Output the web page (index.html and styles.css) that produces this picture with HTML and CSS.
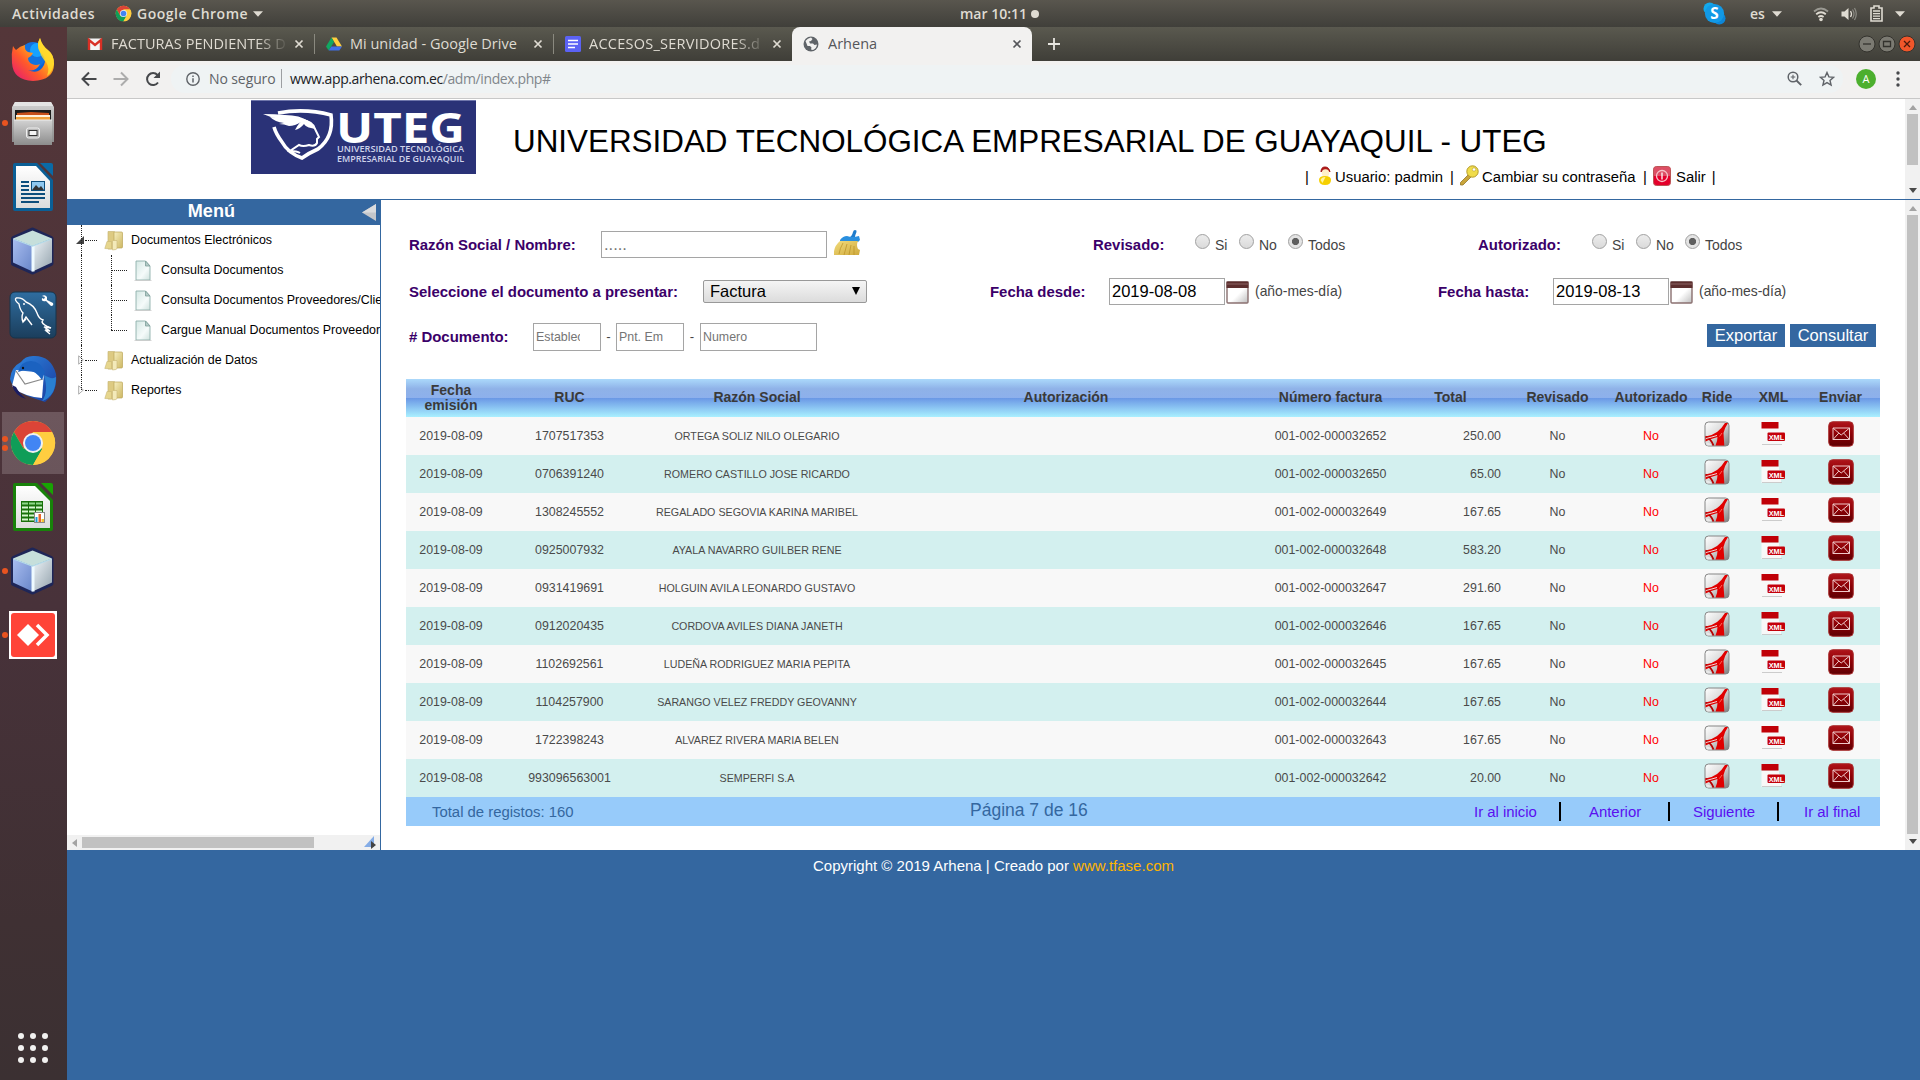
FILE: index.html
```html
<!DOCTYPE html>
<html lang="es">
<head>
<meta charset="utf-8">
<title>Arhena</title>
<link rel="stylesheet" href="styles.css">
</head>
<body>
<svg class="defs" width="0" height="0" aria-hidden="true">
  <defs>
    <linearGradient id="gPdf" x1="0" y1="0" x2="1" y2="1"><stop offset="0" stop-color="#fff"/><stop offset=".45" stop-color="#dedede"/><stop offset="1" stop-color="#7b7b7b"/></linearGradient>
    <linearGradient id="gMail" x1="0" y1="0" x2="0" y2="1"><stop offset="0" stop-color="#b0141a"/><stop offset=".5" stop-color="#8c0005"/><stop offset="1" stop-color="#5e0003"/></linearGradient>
    <linearGradient id="gFolder" x1="0" y1="0" x2="1" y2="1"><stop offset="0" stop-color="#f7efc0"/><stop offset="1" stop-color="#cdb762"/></linearGradient>
    <linearGradient id="gDoc" x1="0" y1="0" x2="1" y2="1"><stop offset="0" stop-color="#d5e8e4"/><stop offset=".6" stop-color="#f5fbfa"/><stop offset="1" stop-color="#cfe2de"/></linearGradient>
    <linearGradient id="gCubeL" x1="0" y1="0" x2="1" y2="1"><stop offset="0" stop-color="#a9bdf0"/><stop offset="1" stop-color="#6886c8"/></linearGradient>
    <linearGradient id="gCubeR" x1="0" y1="0" x2="1" y2="1"><stop offset="0" stop-color="#f0f6fa"/><stop offset="1" stop-color="#94a3ad"/></linearGradient>
    <linearGradient id="gSql" x1="0" y1="0" x2="0" y2="1"><stop offset="0" stop-color="#2f6da0"/><stop offset="1" stop-color="#1b3e5c"/></linearGradient>
    <linearGradient id="gFox" x1="1" y1="0" x2="0" y2="1"><stop offset="0" stop-color="#fff44a"/><stop offset=".35" stop-color="#ffb01a"/><stop offset=".62" stop-color="#ff5a2a"/><stop offset="1" stop-color="#e3107e"/></linearGradient>
    <linearGradient id="gMetal" x1="0" y1="0" x2="0" y2="1"><stop offset="0" stop-color="#d2d2d2"/><stop offset="1" stop-color="#8c8c8c"/></linearGradient>
    <linearGradient id="gBird" x1="0" y1="0" x2="1" y2="1"><stop offset="0" stop-color="#2d86e0"/><stop offset="1" stop-color="#1a3a9c"/></linearGradient>
    <linearGradient id="gPaper" x1="0" y1="0" x2="0" y2="1"><stop offset="0" stop-color="#fff"/><stop offset="1" stop-color="#dcdcdc"/></linearGradient>
    <linearGradient id="gCal" x1="0" y1="0" x2="1" y2="1"><stop offset=".55" stop-color="#fff"/><stop offset="1" stop-color="#bdbdbd"/></linearGradient>
    <linearGradient id="gBroom" x1="0" y1="0" x2="1" y2="1"><stop offset="0" stop-color="#f2dc7c"/><stop offset="1" stop-color="#cfa93c"/></linearGradient>
    <symbol id="pdf" viewBox="0 0 26 26">
      <rect x="1" y="1" width="24" height="24" rx="3.5" fill="url(#gPdf)" stroke="#858585"/>
      <path d="M1.500 15.500Q14 14 21 2h3q-3.500 5-4.500 10l.8 12.500H11.500q2-4 2-8.500Q7 17.500 1.500 20.500z" fill="#e00000"/>
      <path d="M1.500 15.500Q7.500 18.500 9.500 24.500" fill="none" stroke="#b80000" stroke-width="1.800"/>
      <path d="M2 17.500q6-1.500 11-3" fill="none" stroke="#f3f3f3" stroke-width=".9"/>
      <path d="M2 21.500q4 0 6 3H3q-1-1-1-3z" fill="#e8e8e8"/>
      <path d="M15.500 15.500l2.500-3.500" stroke="#ff6a5c" stroke-width="1"/>
    </symbol>
    <symbol id="xml" viewBox="0 0 24 24">
      <path d="M.5 6.500H18V10h2v13H.5z" fill="#f8f8f8"/><path d="M1 22.500h20" stroke="#ccc"/>
      <rect x=".5" y="0" width="17" height="6.500" fill="#c00007"/>
      <rect x="6.500" y="10.500" width="17.500" height="8.500" rx="1" fill="#c4000a"/>
      <text x="7.700" y="17.600" textLength="15.500" lengthAdjust="spacingAndGlyphs" class="xml-text">XML</text>
    </symbol>
    <symbol id="mail" viewBox="0 0 26 26">
      <rect x=".7" y=".7" width="24.600" height="24.600" rx="4" fill="url(#gMail)" stroke="#a33"/>
      <path d="M5 7h16.500v11.500H5zM5 7l8.200 7L21.500 7M5 18.500l5.800-6.400M21.500 18.500l-5.800-6.400" fill="none" stroke="#efc9c9" stroke-width="1"/>
    </symbol>
    <symbol id="folder" viewBox="0 0 20 21">
      <path d="M4 1.500h6l1 .8V19H4z" fill="#ddca82" stroke="#c9b777" stroke-width=".7"/>
      <path d="M10 2h7.500q1 0 1 1v14q0 1-1 1H10z" fill="url(#gFolder)" stroke="#bba659" stroke-width=".7"/>
      <path d="M.8 18.500 3 11.500h4.500v7.500z" fill="#e6d68e" stroke="#c9b777" stroke-width=".6"/>
      <path d="M8.500 20V11.500q0-1 1-1h3.500v7.500q0 1-1 1.500z" fill="#f3eaba" stroke="#c9b777" stroke-width=".6"/>
    </symbol>
    <symbol id="page" viewBox="0 0 18 21">
      <path d="M2 1h9.500L16 6v14H2z" fill="url(#gDoc)" stroke="#8fb0ab" stroke-width=".9"/>
      <path d="M11.500 1v5H16z" fill="#b5ccc8" stroke="#7d9f9a" stroke-width=".8"/>
      <path d="M.5 20.500h17" stroke="#c9c9c9" stroke-width=".8"/>
    </symbol>
    <symbol id="cube" viewBox="0 0 48 48">
      <path d="M23.500 3 42 11.500v25L23.500 45 4.500 36.500v-25z" fill="#1e2658" stroke="#1e2658" stroke-width="5" stroke-linejoin="round"/>
      <path d="M23.500 3.500 43 11.500 23.500 19 4 11.500z" fill="#c6dfdb"/>
      <path d="M4 11.500 23.500 19v25.500L4 35.500z" fill="url(#gCubeL)"/>
      <path d="M43 11.500 23.500 19v25.500l19.500-9z" fill="url(#gCubeR)"/>
      <path d="M24 19v25.500" stroke="#eefaff" stroke-width="3"/>
      <path d="M4.500 12l19 7 19-7" fill="none" stroke="#b5dcea" stroke-width="1.200"/>
    </symbol>
    <symbol id="chrome" viewBox="0 0 48 48">
      <circle cx="24" cy="24" r="22" fill="#ffcd40"/>
      <path d="M4.900 13A22 22 0 0 1 43.100 13H24L14.500 29.500z" fill="#db4437"/>
      <path d="M4.900 13A22 22 0 0 0 24 46l9.500-16.500L14.500 29.500z" fill="#0f9d58"/>
      <path d="M43.100 13H24v11l9.500 5.500L24 46a22 22 0 0 0 19.100-33z" fill="#ffcd40"/>
      <circle cx="24" cy="24" r="10" fill="#f1f1f1"/><circle cx="24" cy="24" r="8" fill="#4285f4"/>
    </symbol>
    <symbol id="calendar" viewBox="0 0 23 23">
      <rect x="1" y="1" width="21" height="21" rx="1" fill="url(#gCal)" stroke="#8a7070" stroke-width="1.400"/>
      <rect x=".5" y=".5" width="22" height="6.500" fill="#5c2e2e"/><path d="M1 3h21" stroke="#8a6262"/>
    </symbol>
    <symbol id="close" viewBox="0 0 10 10"><path d="M1.500 1.500l7 7M8.500 1.500l-7 7" fill="none" stroke="currentColor" stroke-width="1.700"/></symbol>
    <symbol id="caret" viewBox="0 0 10 6"><path d="M0 .3h10L5 5.700z" fill="currentColor"/></symbol>
  </defs>
</svg>

<header class="topbar">
  <span class="activities">Actividades</span>
  <svg class="tb-chrome"><use href="#chrome"/></svg>
  <span class="appname">Google Chrome</span>
  <svg class="caret"><use href="#caret"/></svg>
  <div class="clock"><span>mar 10:11</span><i></i></div>
  <div class="tray">
    <svg class="skype" viewBox="0 0 24 24"><circle cx="7" cy="7" r="6.500" fill="#12a9ec"/><circle cx="17" cy="17" r="6.500" fill="#0d86d8"/><circle cx="12" cy="12" r="10" fill="#1299e6"/><text x="12" y="17.500" text-anchor="middle" class="skype-s">S</text></svg>
    <span class="lang">es</span><svg class="caret"><use href="#caret"/></svg>
    <svg class="wifi" viewBox="0 0 16 16"><g fill="none" stroke="#9a9992" stroke-width="1.800"><path d="M1 5.500q7-6 14 0"/><path d="M3.200 8.300q4.800-4 9.600 0" stroke="#dfdbd2"/><path d="M5.400 11q2.600-2 5.200 0" stroke="#dfdbd2"/></g><circle cx="8" cy="13.500" r="1.800" fill="#dfdbd2"/></svg>
    <svg class="volume" viewBox="0 0 16 16"><path d="M1 5.500h3L8 2v12l-4-3.500H1z" fill="#dfdbd2"/><path d="M10 5q2 3 0 6" fill="none" stroke="#dfdbd2" stroke-width="1.300"/><path d="M12 3.500q3 4.500 0 9M14 2q3.500 6 0 12" fill="none" stroke="#8d8c85" stroke-width="1.200"/></svg>
    <svg class="battery" viewBox="0 0 13 17"><path d="M1 3h3V1h5v2h3v13H1z" fill="none" stroke="#dfdbd2" stroke-width="1.600"/><path d="M3 6h7M3 8.600h7M3 11.200h7M3 13.600h7" stroke="#dfdbd2" stroke-width="1.300"/></svg>
    <svg class="caret"><use href="#caret"/></svg>
  </div>
</header>

<div class="desktop">
  <nav class="launcher">
    <div class="app"><svg viewBox="0 0 48 48"><circle cx="25" cy="27" r="17" fill="#0a62d8"/><circle cx="24" cy="20" r="13" fill="#1273e0"/><circle cx="28" cy="15" r="7" fill="#17a2ff"/><path d="M4 11q1 2 3 4 4-4 9-5-1 5 3 7l5 1q-1 3-5 5 0 4 4 6 4 2 8 0-4 8-12 6 11 5 16-5Q38 23 31 17q-4-7 0-14 2 8 9 13 5 4 5 13 0 16-21 17Q4 45 3 28 2 19 4 11z" fill="url(#gFox)"/><path d="M31 17q-4-7 0-14 2 8 9 13 5 4 5 13l-2 6q-2 4-5 6 3-8-1-14-5-5-6-10z" fill="#ffe02e" opacity=".8"/></svg></div>
    <div class="app running"><svg viewBox="0 0 48 48"><path d="M6 3h36l3 5v35H3V8z" fill="url(#gMetal)"/><path d="M6 3h36l2 4H4z" fill="#e4e4e4"/><rect x="6" y="11" width="36" height="12" fill="#1c1c1c"/><path d="M8 14l14-1 18 1v8H8z" fill="#c8501a"/><rect x="7" y="16" width="34" height="2" fill="#fff1dc"/><path d="M7 18h34v4H7z" fill="#f0a03c"/><path d="M5 21h38v25H5z" fill="url(#gMetal)"/><path d="M5 21h38" stroke="#eee"/><rect x="17.500" y="29" width="13" height="10" rx="2" fill="#b9b9b9" stroke="#efefef"/><rect x="20" y="31.500" width="8" height="5" fill="#f4f4f4" stroke="#333"/></svg></div>
    <div class="app"><svg viewBox="0 0 48 48"><path d="M6 0h22l16 17v29q0 2-2 2H6q-2 0-2-2V2q0-2 2-2z" fill="#0a5f96"/><path d="M31 0h11q2 0 2 2v11z" fill="#0a6aa6"/><path d="M7 3h20l14 15v27H7z" fill="url(#gPaper)"/><g stroke="#0d4e7c" stroke-width="2"><path d="M12 19h8M12 23h8M12 27h8M12 31h24M12 35h24M12 39h18"/></g><rect x="22.500" y="18.500" width="13" height="9" fill="#8fc8ef" stroke="#0d4e7c"/><path d="M23 27l4-5 3 3 2-2 3 4z" fill="#333"/></svg></div>
    <div class="app"><svg><use href="#cube"/></svg></div>
    <div class="app"><svg viewBox="0 0 48 48"><rect x="1" y="1" width="46" height="46" rx="5" fill="url(#gSql)" stroke="#16344d"/><path d="M7 7q6-1 10 4 8 3 11 11 2 6 6 7l-1 2q1 3 9 6l-7-1 6 4-5-1 5 4M7 7q-2 2 3 6 1 6 4 9-2 4 0 9l3-5 6 8M14 31l3-3" fill="none" stroke="#fff" stroke-width="1.400"/><path d="M33 5q3-2 5 1l0 3 6 3q1 3-2 3l-5-5q-5 1-4-3l2 1 1-2z" fill="#fff"/><circle cx="15" cy="13" r="1" fill="#fff"/></svg></div>
    <div class="app"><svg viewBox="0 0 48 48"><path d="M24 1q18-1 23 18 2 18-11 28l-9-3Q4 37 1 24 2 12 12 7 16 1 24 1z" fill="url(#gBird)"/><path d="M3 31 7 15l28 3-2 25-8-1Q8 38 3 31z" fill="#fff"/><path d="M7 16l9 13 18-5" fill="none" stroke="#8a8a8a" stroke-width="1.200"/><path d="M9 17Q12 6 22 6q9 0 14 11l-3 8q-6-9-14-10-5 0-10 2z" fill="#1b62c0"/><path d="M33 46q7-9 2-26 8 5 12 2 0 9-3 15-4 7-11 9z" fill="#2a7fd0"/><path d="M3 30q3 11 14 14-7-6-10-12z" fill="#1a1c62"/><circle cx="14" cy="13" r="1.200" fill="#111"/></svg></div>
    <div class="app running twice active"><svg><use href="#chrome"/></svg></div>
    <div class="app"><svg viewBox="0 0 48 48"><path d="M6 0h22l16 17v29q0 2-2 2H6q-2 0-2-2V2q0-2 2-2z" fill="#18820a"/><path d="M32 0h10q2 0 2 2v10z" fill="#18a303"/><path d="M7 3h19l15 15v27H7z" fill="url(#gPaper)"/><rect x="12" y="18" width="22" height="21" fill="#18700a"/><path d="M13 19.500h6v2h-6zM20 19.500h6v2h-6zM27 19.500h6v2h-6z" fill="#8fd88a"/><path d="M13 23.500h6v2h-6zm7 0h6v2h-6zm7 0h6v2h-6zm-14 4h6v2h-6zm7 0h6v2h-6zm7 0h6v2h-6zm-14 4h6v2h-6zm7 0h6v2h-6zm-7 4h6v2h-6zm7 0h6v2h-6z" fill="#d8f6d2"/><rect x="25.500" y="29.500" width="10" height="10" fill="#fff" stroke="#888"/><path d="M26.500 34h2v5h-2z" fill="#1b9ad6"/><path d="M29.500 31h2.500v8h-2.500z" fill="#e8662b"/><path d="M32.500 36h2.500v3h-2.500z" fill="#f4c430"/></svg></div>
    <div class="app running"><svg><use href="#cube"/></svg></div>
    <div class="app running"><svg viewBox="0 0 48 48"><path d="M0 0h48v48H0z" fill="#fff"/><rect x="2" y="2" width="44" height="44" rx="3" fill="#ff4438"/><path d="M19 13l11 11-11 11L8 24z" fill="#fff"/><path d="M28 14l10 10-10 10" fill="none" stroke="#fff" stroke-width="3.500"/></svg></div>
    <svg class="all-apps" viewBox="0 0 32 32"><g fill="#f2f1f0"><circle cx="4" cy="4" r="3"/><circle cx="16" cy="4" r="3"/><circle cx="28" cy="4" r="3"/><circle cx="4" cy="16" r="3"/><circle cx="16" cy="16" r="3"/><circle cx="28" cy="16" r="3"/><circle cx="4" cy="28" r="3"/><circle cx="16" cy="28" r="3"/><circle cx="28" cy="28" r="3"/></g></svg>
  </nav>

  <main class="browser">
    <div class="tabs">
      <div class="tab t1"><svg class="fav" viewBox="0 0 16 16"><path d="M1 2.500h14v11.500H1z" fill="#f4f4f4"/><path d="M2 14V4l6 5 6-5v10" fill="none" stroke="#d93025" stroke-width="2.400"/></svg><span class="name fade">FACTURAS PENDIENTES D</span><svg class="x"><use href="#close"/></svg></div>
      <div class="tab t2"><svg class="fav" viewBox="0 0 16 16"><path d="M5.500 1.500h5L16 10.500h-5z" fill="#ffcf3f"/><path d="M5.500 1.500L8 6 2.700 14.500 0 10.500z" fill="#11a861"/><path d="M5.300 10.500H16l-2.700 4H2.700z" fill="#3f6fe8"/></svg><span class="name">Mi unidad - Google Drive</span><svg class="x"><use href="#close"/></svg></div>
      <div class="tab t3"><svg class="fav" viewBox="0 0 16 16"><rect width="16" height="16" rx="1.500" fill="#5b62f4"/><path d="M3 4.500h10M3 8h10M3 11.500h7" stroke="#fff" stroke-width="1.700"/></svg><span class="name fade">ACCESOS_SERVIDORES.d</span><svg class="x"><use href="#close"/></svg></div>
      <div class="tab current"><svg class="fav" viewBox="0 0 16 16"><circle cx="8" cy="8" r="7.500" fill="#5f6368"/><path d="M2.500 5q2-3 5.500-3.500L9.500 3 8 5 6 5.500 7 7.500h3l1.500 1.500 2.500-.5q-.5 4-4 5.500L8 13.500l.5-2L7 10H4.500z" fill="#f2f1f0"/></svg><span class="name">Arhena</span><svg class="x"><use href="#close"/></svg></div>
      <svg class="plus" viewBox="0 0 12 12"><path d="M6 0v12M0 6h12" stroke="#e8e6e0" stroke-width="1.800"/></svg>
      <div class="winbtns"><svg viewBox="0 0 18 18"><circle cx="9" cy="9" r="8" fill="#7b7a72" stroke="#33322d"/><path d="M5 9h8" stroke="#33322d" stroke-width="1.300"/></svg><svg viewBox="0 0 18 18"><circle cx="9" cy="9" r="8" fill="#7b7a72" stroke="#33322d"/><path d="M5.500 6.500h7v5h-7z" fill="none" stroke="#33322d" stroke-width="1.300"/></svg><svg viewBox="0 0 18 18"><circle cx="9" cy="9" r="8" fill="#f0562a" stroke="#33322d"/><path d="M6 6l6 6M12 6l-6 6" stroke="#4a1a0c" stroke-width="1.300"/></svg></div>
    </div>
    <div class="toolbar">
      <svg class="nav" viewBox="0 0 16 16"><path d="M15.500 8H2M8 1.500L1.500 8 8 14.500" fill="none" stroke="#46484b" stroke-width="2"/></svg>
      <svg class="nav" viewBox="0 0 16 16"><path d="M.5 8H14M8 1.500L14.500 8 8 14.500" fill="none" stroke="#acacac" stroke-width="2"/></svg>
      <svg class="nav" viewBox="0 0 16 16"><path d="M13 11.500A6 6 0 1 1 12.500 4" fill="none" stroke="#46484b" stroke-width="2"/><path d="M15 .5v6.500H8.500z" fill="#46484b"/></svg>
      <div class="omnibox">
        <svg class="info" viewBox="0 0 14 14"><circle cx="7" cy="7" r="6.200" fill="none" stroke="#5f6368" stroke-width="1.400"/><path d="M7 6.200v4.300M7 3.500v1.500" stroke="#5f6368" stroke-width="1.500"/></svg>
        <span class="insecure">No seguro</span><i class="divider"></i>
        <span class="url">www.app.arhena.com.ec<em>/adm/index.php#</em></span>
        <svg class="zoom" viewBox="0 0 15 15"><circle cx="6" cy="6" r="4.800" fill="none" stroke="#5f6368" stroke-width="1.500"/><path d="M9.500 9.500l4.700 4.700" stroke="#5f6368" stroke-width="1.900"/><path d="M6 3.700v4.600M3.700 6h4.600" stroke="#5f6368" stroke-width="1.100"/></svg>
        <svg class="star" viewBox="0 0 16 16"><path d="M8 1.500l1.900 4.400 4.700.4-3.600 3.100 1.100 4.700L8 11.600l-4.100 2.500L5 9.400 1.400 6.300l4.700-.4z" fill="none" stroke="#5f6368" stroke-width="1.400"/></svg>
      </div>
      <span class="avatar">A</span>
      <svg class="dots" viewBox="0 0 4 16"><circle cx="2" cy="2" r="1.700"/><circle cx="2" cy="8" r="1.700"/><circle cx="2" cy="14" r="1.700"/></svg>
    </div>

    <section class="banner">
      <svg class="logo" viewBox="0 0 225 74"><rect width="225" height="74" fill="#2a3277"/><path d="M0 .5h225" stroke="#6f76ab"/>
        <path d="M27 13Q54 8 80 15 83 37 67 49q-9 4-16 9-14-5-20-16-6-8-8-15" fill="none" stroke="#fff" stroke-width="3.600"/>
        <path d="M12 14q12 0 22 1 15 0 23 6l-7 1q-6 4-12 4-5-2-10-2l5-1q-9-1-14-6l7 1q-8-1-14-4z" fill="#fff"/>
        <path d="M50 20q12 1 14 9l4 8-2 2v4q-2 4-8 2-6 2-10 0l-9 6q7 0 10 2" fill="none" stroke="#fff" stroke-width="2"/><path d="M53 19q8 2 11 10l-4-1q-5-1-7-4-4 5-9 6 4-8 9-11z" fill="#fff"/>
        <text x="85" y="43" class="logo-name" textLength="129" lengthAdjust="spacingAndGlyphs">UTEG</text>
        <text x="86" y="52" class="logo-sub" textLength="127" lengthAdjust="spacingAndGlyphs">UNIVERSIDAD TECNOLÓGICA</text><text x="86" y="61.500" class="logo-sub" textLength="127" lengthAdjust="spacingAndGlyphs">EMPRESARIAL DE GUAYAQUIL</text></svg>
      <div class="banner-text">
        <h1>UNIVERSIDAD TECNOLÓGICA EMPRESARIAL DE GUAYAQUIL - UTEG</h1>
        <div class="userbar"><b>|</b>
          <svg class="person" viewBox="0 0 14 20"><path d="M3 6q0-5 4-5t5 5" fill="#b01818" stroke="#a01212"/><circle cx="7.500" cy="7" r="3.800" fill="#fff0c8"/><path d="M1 14q0-4 6-4t6 4q0 5-6 5t-6-5z" fill="#f6d000"/><path d="M2.500 14q1-3 5-3l-3 6z" fill="#fff4a0"/></svg><span class="user">Usuario: padmin</span><b>|</b>
          <svg class="key" viewBox="0 0 20 22"><path d="M10 9l2.500 2.500L4 20H1.500v-2.500z" fill="#c9a53a" stroke="#94782a" stroke-width=".8"/><circle cx="13.500" cy="6.500" r="5.700" fill="#f0dc4a" stroke="#b39a2a"/><circle cx="15" cy="4.500" r="1.700" fill="#fff" stroke="#b39a2a" stroke-width=".6"/></svg><span class="pass">Cambiar su contraseña</span><b>|</b>
          <svg class="power" viewBox="0 0 18 20"><rect x=".5" y=".5" width="17" height="19" rx="3" fill="#e4002b" stroke="#b55"/><path d="M1 3q0-2 2-2h12q2 0 2 2v7H1z" fill="#d8838c" opacity=".6"/><circle cx="9" cy="10" r="5.500" fill="none" stroke="#f7c4ca" stroke-width="1.300"/><path d="M9 6.500v7" stroke="#fff" stroke-width="1.300"/></svg><span>Salir</span><b>|</b>
        </div>
      </div>
      <div class="vscroll"><svg class="arrow dim" viewBox="0 0 8 5"><path d="M0 5h8L4 0z"/></svg><i class="thumb short"></i><svg class="arrow down" viewBox="0 0 8 5"><path d="M0 0h8L4 5z"/></svg></div>
    </section>

    <section class="frames">
      <aside class="sidebar">
        <div class="menu-head"><span>Menú</span><svg viewBox="0 0 14 17"><path d="M14 0v17L0 8.500z" fill="#c4c6ca"/><path d="M14 0L0 8.500h14z" fill="#dadbdd"/></svg></div>
        <ul class="tree">
          <li><svg class="toggle" viewBox="0 0 8 8"><path d="M8 0v8H0z" fill="#444"/></svg><i class="twig"></i><svg class="folder"><use href="#folder"/></svg><span>Documentos Electrónicos</span></li>
          <li class="leaf"><i class="twig"></i><svg class="page"><use href="#page"/></svg><span>Consulta Documentos</span></li>
          <li class="leaf"><i class="twig"></i><svg class="page"><use href="#page"/></svg><span>Consulta Documentos Proveedores/Clie</span></li>
          <li class="leaf last"><i class="twig"></i><svg class="page"><use href="#page"/></svg><span>Cargue Manual Documentos Proveedor</span></li>
          <li class="closed"><svg class="toggle" viewBox="0 0 6 10"><path d="M.7.8v8.400L5.300 5z" fill="#fff" stroke="#aaa"/></svg><i class="twig"></i><svg class="folder"><use href="#folder"/></svg><span>Actualización de Datos</span></li>
          <li class="closed end"><svg class="toggle" viewBox="0 0 6 10"><path d="M.7.8v8.400L5.300 5z" fill="#fff" stroke="#aaa"/></svg><i class="twig"></i><svg class="folder"><use href="#folder"/></svg><span>Reportes</span></li>
        </ul>
        <div class="hscroll"><svg viewBox="0 0 5 8"><path d="M5 0v8L0 4z" fill="#a3a3a3"/></svg><i></i><svg class="grip" viewBox="0 0 12 14"><path d="M10 0v11H0z" fill="#84ace6"/><path d="M7 5v8l5-4z" fill="#444"/></svg></div>
      </aside>

      <div class="content">
        <form class="filters">
          <div class="frow r1">
            <label class="c-name">Razón Social / Nombre:</label><input class="f-name" placeholder=".....">
            <svg class="broom" viewBox="0 0 26 26"><path d="M14 8q4-1 5-6 .5-2 2-2 2 0 1.500 2-1.500 3-2 7z" fill="#1f7ccc"/><path d="M6 10q3-4 7-4 5 2 12 0l1 4-2 2-18 0z" fill="#2a8fdf"/><path d="M6 11h18q-2 4 0 8l2 1-1 5H0q-1-8 6-14z" fill="url(#gBroom)"/><path d="M5 24q1-6 4-11M10 25l3-11M15 25l2-10M20 25v-9" stroke="#b98f24" stroke-width=".7" fill="none"/></svg>
            <label class="c-rev">Revisado:</label>
            <div class="radios"><i></i><span class="si">Si</span><i></i><span class="no">No</span><i class="on"></i><span>Todos</span></div>
            <label class="c-aut">Autorizado:</label>
            <div class="radios"><i></i><span class="si">Si</span><i></i><span class="no">No</span><i class="on"></i><span>Todos</span></div>
          </div>
          <div class="frow r2">
            <label class="c-doc">Seleccione el documento a presentar:</label><div class="select"><span>Factura</span><svg viewBox="0 0 8 8"><path d="M0 0h8L4 8z"/></svg></div>
            <label class="c-from">Fecha desde:</label><input class="date" value="2019-08-08"><svg class="cal"><use href="#calendar"/></svg><span class="hint">(año-mes-día)</span>
            <label class="c-to">Fecha hasta:</label><input class="date" value="2019-08-13"><svg class="cal"><use href="#calendar"/></svg><span class="hint">(año-mes-día)</span>
          </div>
          <div class="frow r3">
            <label class="c-num"># Documento:</label><input class="small" placeholder="Establec"><span class="dash">-</span><input class="small" placeholder="Pnt. Em"><span class="dash wide">-</span><input class="num" placeholder="Numero">
            <button type="button" class="export">Exportar</button><button type="button" class="query">Consultar</button>
          </div>
        </form>

        <div class="table">
          <div class="row thead"><span>Fecha<br>emisión</span><span>RUC</span><span>Razón Social</span><span>Autorización</span><span>Número factura</span><span>Total</span><span>Revisado</span><span>Autorizado</span><span>Ride</span><span>XML</span><span>Enviar</span></div>
          <div class="row"><span>2019-08-09</span><span>1707517353</span><span class="who">ORTEGA SOLIZ NILO OLEGARIO</span><span></span><span>001-002-000032652</span><span class="amt">250.00</span><span>No</span><span class="red">No</span><svg class="ic"><use href="#pdf"/></svg><svg class="ic xm"><use href="#xml"/></svg><svg class="ic"><use href="#mail"/></svg></div>
          <div class="row"><span>2019-08-09</span><span>0706391240</span><span class="who">ROMERO CASTILLO JOSE RICARDO</span><span></span><span>001-002-000032650</span><span class="amt">65.00</span><span>No</span><span class="red">No</span><svg class="ic"><use href="#pdf"/></svg><svg class="ic xm"><use href="#xml"/></svg><svg class="ic"><use href="#mail"/></svg></div>
          <div class="row"><span>2019-08-09</span><span>1308245552</span><span class="who">REGALADO SEGOVIA KARINA MARIBEL</span><span></span><span>001-002-000032649</span><span class="amt">167.65</span><span>No</span><span class="red">No</span><svg class="ic"><use href="#pdf"/></svg><svg class="ic xm"><use href="#xml"/></svg><svg class="ic"><use href="#mail"/></svg></div>
          <div class="row"><span>2019-08-09</span><span>0925007932</span><span class="who">AYALA NAVARRO GUILBER RENE</span><span></span><span>001-002-000032648</span><span class="amt">583.20</span><span>No</span><span class="red">No</span><svg class="ic"><use href="#pdf"/></svg><svg class="ic xm"><use href="#xml"/></svg><svg class="ic"><use href="#mail"/></svg></div>
          <div class="row"><span>2019-08-09</span><span>0931419691</span><span class="who">HOLGUIN AVILA LEONARDO GUSTAVO</span><span></span><span>001-002-000032647</span><span class="amt">291.60</span><span>No</span><span class="red">No</span><svg class="ic"><use href="#pdf"/></svg><svg class="ic xm"><use href="#xml"/></svg><svg class="ic"><use href="#mail"/></svg></div>
          <div class="row"><span>2019-08-09</span><span>0912020435</span><span class="who">CORDOVA AVILES DIANA JANETH</span><span></span><span>001-002-000032646</span><span class="amt">167.65</span><span>No</span><span class="red">No</span><svg class="ic"><use href="#pdf"/></svg><svg class="ic xm"><use href="#xml"/></svg><svg class="ic"><use href="#mail"/></svg></div>
          <div class="row"><span>2019-08-09</span><span>1102692561</span><span class="who">LUDEÑA RODRIGUEZ MARIA PEPITA</span><span></span><span>001-002-000032645</span><span class="amt">167.65</span><span>No</span><span class="red">No</span><svg class="ic"><use href="#pdf"/></svg><svg class="ic xm"><use href="#xml"/></svg><svg class="ic"><use href="#mail"/></svg></div>
          <div class="row"><span>2019-08-09</span><span>1104257900</span><span class="who">SARANGO VELEZ FREDDY GEOVANNY</span><span></span><span>001-002-000032644</span><span class="amt">167.65</span><span>No</span><span class="red">No</span><svg class="ic"><use href="#pdf"/></svg><svg class="ic xm"><use href="#xml"/></svg><svg class="ic"><use href="#mail"/></svg></div>
          <div class="row"><span>2019-08-09</span><span>1722398243</span><span class="who">ALVAREZ RIVERA MARIA BELEN</span><span></span><span>001-002-000032643</span><span class="amt">167.65</span><span>No</span><span class="red">No</span><svg class="ic"><use href="#pdf"/></svg><svg class="ic xm"><use href="#xml"/></svg><svg class="ic"><use href="#mail"/></svg></div>
          <div class="row"><span>2019-08-08</span><span>993096563001</span><span class="who">SEMPERFI S.A</span><span></span><span>001-002-000032642</span><span class="amt">20.00</span><span>No</span><span class="red">No</span><svg class="ic"><use href="#pdf"/></svg><svg class="ic xm"><use href="#xml"/></svg><svg class="ic"><use href="#mail"/></svg></div>
          <div class="pager"><span class="total">Total de registos: 160</span><span class="pageno">Página 7 de 16</span><a class="p1">Ir al inicio</a><i></i><a class="p2">Anterior</a><i></i><a class="p3">Siguiente</a><i></i><a class="p4">Ir al final</a></div>
        </div>
      </div>
      <div class="vscroll"><svg class="arrow dim" viewBox="0 0 8 5"><path d="M0 5h8L4 0z"/></svg><i class="thumb"></i><svg class="arrow down" viewBox="0 0 8 5"><path d="M0 0h8L4 5z"/></svg></div>
    </section>
    <footer>Copyright © 2019 Arhena | Creado por&nbsp;<a>www.tfase.com</a></footer>
  </main>
</div>
</body>
</html>
```
FILE: styles.css
```css
* { box-sizing: border-box; }
body { margin: 0; width: 1920px; height: 1080px; overflow: hidden; display: flex; flex-direction: column; font-family: "Liberation Sans", Arial, sans-serif; }
svg { display: block; flex: none; }
span, a, label, b { white-space: nowrap; }
.defs { position: absolute; }
.xml-text { font: bold 7.5px "Liberation Sans", sans-serif; fill: #fff; }
.skype-s { font: bold 16px "Open Sans", sans-serif; fill: #fff; }

/* system bar */
.topbar { height: 27px; flex: none; display: flex; align-items: center; background: linear-gradient(#59564e, #403f3a); color: #dfdbd2; font: 600 14px/27px "Open Sans", "Noto Sans", sans-serif; padding-left: 12px; }
.activities { width: 103px; letter-spacing: .5px; }
.tb-chrome { width: 17px; height: 17px; }
.appname { width: 112px; margin-left: 5px; letter-spacing: .52px; }
.caret { width: 10px; height: 6px; }
.topbar > .caret { margin-left: 4px; }
.clock { margin-left: 697px; display: flex; align-items: center; width: 90px; }
.clock span { width: 71px; }
.clock i { width: 8px; height: 8px; border-radius: 50%; background: #dfdbd2; }
.tray { display: flex; align-items: center; margin-left: auto; padding-right: 15px; }
.skype { width: 23px; height: 23px; }
.lang { width: 16px; margin: 0 6px 0 24px; }
.wifi { width: 16px; height: 16px; margin-left: 31px; }
.volume { width: 17px; height: 16px; margin-left: 11px; }
.battery { width: 13px; height: 17px; margin: 0 12px 0 13px; }

.desktop { flex: 1; display: flex; min-height: 0; }
.launcher { width: 67px; flex: none; display: flex; flex-direction: column; background: linear-gradient(#543639, #48323a 55%, #3f3033 85%, #3b3032); }
.app { height: 64px; display: flex; align-items: center; padding-left: 9px; position: relative; flex: none; }
.app svg { width: 48px; height: 48px; }
.app.active { background: linear-gradient(#6d575d, #6a555b) 2px 1px / 62px 62px no-repeat; }
.running::before { content: ""; position: absolute; left: 2px; top: 29px; width: 6px; height: 6px; border-radius: 50%; background: #e95420; }
.twice::before { top: 25px; box-shadow: 0 9px #e95420; }
.all-apps { width: 32px; height: 32px; margin: auto 0 16px 17px; }

.browser { flex: 1; display: flex; flex-direction: column; min-width: 0; background: #3467a0; }
.tabs { height: 34px; flex: none; display: flex; background: linear-gradient(#5a594f, #3f3e38); color: #dfdbd2; font: 14.5px "Open Sans", "Noto Sans", sans-serif; padding-left: 9px; }
.tab { display: flex; align-items: center; padding-left: 11px; padding-bottom: 1px; }
.t1 { width: 239px; } .t2 { width: 239px; } .t3 { width: 238px; }
.t1, .t2 { background: linear-gradient(#8a897f, #8a897f) 100% 7px / 1px 20px no-repeat; }
.fav { width: 16px; height: 16px; }
.name { margin-left: 8px; width: 178px; overflow: hidden; }
.t1 .name { letter-spacing: .05px; }
.t3 .name { letter-spacing: .25px; }
.fade { -webkit-mask-image: linear-gradient(90deg, #000 145px, transparent 178px); mask-image: linear-gradient(90deg, #000 145px, transparent 178px); }
.x { width: 10px; height: 10px; margin-left: 5px; }
.current .x { margin-left: 6px; }
.current .name { margin-left: 9px; }
.current { width: 240px; background: #f2f1f0; border-radius: 8px 8px 0 0; color: #55565a; }
.plus { width: 12px; height: 12px; margin: 11px 0 0 16px; }
.winbtns { margin: 8px 4px 0 auto; display: flex; gap: 2px; }
.winbtns svg { width: 18px; height: 18px; }

.toolbar { height: 38px; flex: none; display: flex; align-items: center; background: #f2f1f0; border-bottom: 1px solid #c8c8c8; padding: 0 0 2px 14px; font: 14px "Open Sans", "Noto Sans", sans-serif; }
.nav { width: 16px; height: 16px; margin-right: 16px; }
.omnibox { width: 1672px; height: 28px; margin-left: -6px; border-radius: 14px; background: #eff3f4; display: flex; align-items: center; padding-left: 14px; flex: none; }
.info { width: 14px; height: 14px; margin-left: 1px; }
.insecure { width: 64px; margin-left: 9px; color: #5f6368; letter-spacing: -.1px; }
.divider { width: 1px; height: 19px; margin: 0 8px; background: #9c9fa2; }
.url { color: #202124; flex: 1; letter-spacing: -.4px; }
.url em { font-style: normal; color: #80868b; }
.zoom { width: 15px; height: 15px; margin-right: 17px; }
.star { width: 16px; height: 16px; margin-right: 8px; }
.avatar { width: 20px; height: 20px; border-radius: 50%; background: #4caf2e; color: #fff; font-size: 11px; line-height: 20px; text-align: center; margin-left: 13px; }
.dots { width: 4px; height: 16px; margin-left: 20px; fill: #46484b; }

.banner { height: 101px; flex: none; background: #fff; border-bottom: 1px solid #3467a0; display: flex; }
.logo { width: 225px; height: 74px; margin: 1px 0 0 184px; }
.logo-name { font: bold 41px "Open Sans", sans-serif; fill: #fff; }
.logo-sub { font: 600 8.5px "Open Sans", sans-serif; fill: #cfd2ea; }
.banner-text { flex: 1; padding-left: 37px; }
h1 { margin: 25px 0 0; font-size: 31.4px; line-height: 36px; font-weight: 400; color: #000; white-space: nowrap; }
.userbar { display: flex; align-items: center; height: 22px; margin: 5px 0 0 792px; font-size: 14.85px; }
.userbar b { font-weight: 400; width: 4px; text-align: center; }
.userbar span, .userbar b { padding-top: 1px; }
.person { width: 14px; height: 20px; margin-left: 9px; }
.user { width: 110px; margin: 0 5px 0 3px; }
.key { width: 20px; height: 22px; margin-left: 5px; }
.pass { width: 156px; margin: 0 5px 0 3px; }
.power { width: 18px; height: 20px; margin: 0 5px 0 6px; }
.userbar b:last-child { margin-left: 6px; }

.vscroll { width: 15px; flex: none; background: #f1f1f1; display: flex; flex-direction: column; align-items: center; padding: 6px 0; }
.arrow { width: 8px; height: 5px; fill: #4a4a4a; }
.arrow.dim { fill: #a3a3a3; }
.thumb { width: 11px; flex: 1; margin: 4px 0 5px; background: #c1c1c1; }
.short { flex: none; height: 51px; }
.down { margin-top: auto; }

.frames { height: 650px; flex: none; display: flex; background: #fff; }
.sidebar { width: 314px; flex: none; border-right: 1px solid #3467a0; display: flex; flex-direction: column; overflow: hidden; }
.menu-head { height: 25px; flex: none; background: #3467a0; color: #fff; font-weight: 700; font-size: 18.1px; line-height: 22px; display: flex; justify-content: flex-end; }
.menu-head svg { width: 14px; height: 17px; margin: 4px 4px 0 127px; }
.tree { list-style: none; margin: 0; padding: 0 0 0 14px; flex: 1; font-size: 12.45px; color: #000; overflow: hidden; }
.tree li { height: 30px; display: flex; align-items: center; position: relative; }
.tree li::before { content: ""; position: absolute; left: 0; top: 0; height: 30px; border-left: 1px dotted #222; }
.tree li.end::before { height: 15px; }
.toggle { width: 8px; height: 8px; margin-left: -5px; }
.closed .toggle { width: 6px; height: 10px; margin: 0 0 0 -3px; }
.twig { border-top: 1px dotted #222; width: 12px; margin-left: 1px; flex: none; }
.folder { width: 20px; height: 21px; margin: 0 7px 0 7px; }
.leaf { padding-left: 30px; }
.leaf::after { content: ""; position: absolute; left: 30px; top: 0; height: 30px; border-left: 1px dotted #222; }
.leaf.last::after { height: 15px; }
.leaf .twig { width: 16px; margin-left: 0; }
.page { width: 18px; height: 21px; margin: 0 9px 0 7px; }
.hscroll { height: 15px; flex: none; background: #f1f1f1; display: flex; align-items: center; padding-left: 5px; }
.hscroll svg { width: 5px; height: 8px; }
.hscroll i { width: 232px; height: 11px; margin-left: 5px; background: #c1c1c1; }
.hscroll .grip { width: 12px; height: 14px; margin-left: 50px; }

.content { flex: 1; padding: 26px 25px 0 25px; }
.filters { height: 153px; padding-left: 3px; color: #444; font-size: 13.2px; }
.frow { display: flex; align-items: center; }
.r1 { height: 38px; } .r2 { height: 54px; } .r3 { height: 37px; }
label { flex: none; color: #3b0069; font-weight: 700; font-size: 14.95px; }
.r1 { font-size: 14px; }
.r1 label, .r1 .radios { margin-bottom: 1px; }
input { border: 1px solid #a5a5a5; border-radius: 0; background: #fff; outline: none; padding: 0 2px; font: 16.5px "Liberation Sans", sans-serif; color: #000; }
input::placeholder { color: #757575; opacity: 1; }
.c-name { width: 192px; }
.f-name { width: 226px; height: 27px; margin-bottom: 1px; }
.broom { width: 26px; height: 26px; margin: 0 233px 4px 7px; }
.c-rev { width: 102px; }
.c-aut { width: 114px; margin-left: 133px; }
.radios { display: flex; align-items: center; width: 150px; }
.radios i { width: 15px; height: 15px; border-radius: 50%; border: 1px solid #a0a0a0; background: linear-gradient(#ececec, #dadada); margin: 0 5px 6px 0; flex: none; }
.radios .on { background: radial-gradient(circle, #5e5e5e 3.2px, #e3e3e3 4px); }
.si { width: 24px; flex: none; } .no { width: 29px; flex: none; }
.c-doc { width: 294px; }
.select { width: 164px; height: 23px; border: 1px solid #999; border-radius: 2px; background: linear-gradient(#f5f5f5, #dcdcdc); font-size: 16.5px; color: #000; display: flex; align-items: center; padding: 0 6px; justify-content: space-between; }
.select svg { width: 8px; height: 8px; }
.c-from { width: 119px; margin-left: 123px; }
.date { width: 116px; height: 27px; }
.cal { width: 23px; height: 23px; margin: 2px 6px 0 1px; }
.hint { width: 87px; font-size: 13.9px; }
.c-to { width: 115px; margin-left: 96px; }
.c-num { width: 124px; }
.small, .num { height: 28px; font-size: 12.4px; }
.small { width: 68px; padding-right: 20px; }
.num { width: 117px; }
.dash { width: 15px; text-align: center; }
.wide { width: 16px; }
button { height: 23px; border: 0; padding: 0; background: #3467a0; color: #fff; font: 16.5px/23px "Liberation Sans", sans-serif; }
.r3 button { margin-bottom: 2px; }
.export { width: 78px; margin-left: 890px; }
.query { width: 86px; margin-left: 5px; }

.table { width: 1474px; }
.row { display: grid; grid-template-columns: 90px 147px 228px 390px 139px 101px 113px 74px 58px 55px 79px; height: 38px; align-items: center; text-align: center; font-size: 12.4px; color: #4a4a4a; background: #f8f8f8; }
.row:nth-child(odd) { background: #d3f0ef; }
.row.thead { background: linear-gradient(#abd9fb 0, #8fb2e8 26%, #8db0ec 50%, #6a97e5 50%, #aaf0ff 100%); color: #3a3a3a; font-weight: 700; font-size: 14px; line-height: 15px; padding-bottom: 1px; }
.who { font-size: 10.7px; }
.amt { text-align: right; }
.red { color: #f00; }
.ic { width: 26px; height: 26px; justify-self: center; margin-bottom: 5px; }
.xm { width: 24px; height: 24px; margin-right: 1px; }
.pager { height: 29px; display: flex; align-items: center; background: #97cbfa; color: #3467a0; font-size: 14.9px; padding-left: 26px; }
.total { width: 538px; }
.pageno { width: 504px; font-size: 17.5px; padding-bottom: 2px; }
.pager a { color: #5a0ff0; }
.pager i { width: 2px; height: 19px; background: #000; }
.p1 { width: 85px; } .p2 { width: 79px; margin-left: 28px; } .p3 { width: 84px; margin-left: 23px; } .p4 { margin-left: 25px; }
footer { display: flex; justify-content: center; padding: 7px 0 0; font-size: 15px; line-height: 18px; color: #fff; }
footer a { color: #ffb400; }
```
